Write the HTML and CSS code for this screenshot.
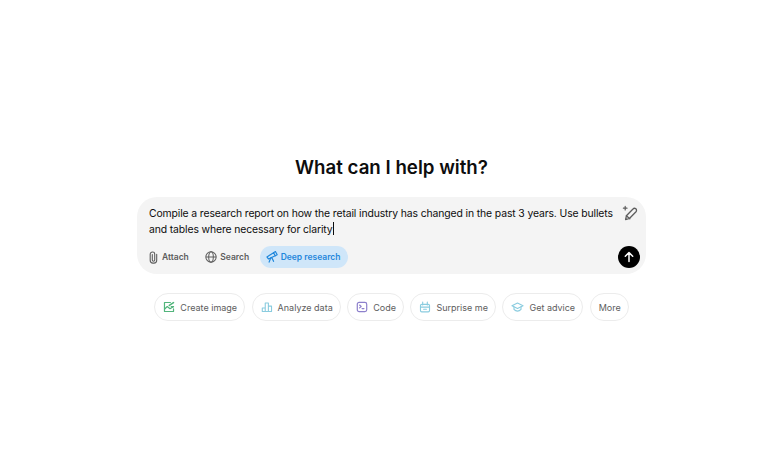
FILE: index.html
```html
<!DOCTYPE html>
<html lang="en">
<head>
    <meta charset="UTF-8">
    <title>What can I help with?</title>
    <link rel="stylesheet" href="styles.css">
</head>
<body>

<div class="container">
    <h1>What can I help with?</h1>

    <div class="composer">
        <div class="composer-top">
            <p class="prompt">Compile a research report on how the retail industry has changed in the past 3 years. Use bullets and tables where necessary for clarity<span class="caret"></span></p>
            <svg class="wand" width="16" height="16" viewBox="0 0 16 16" fill="none" stroke="#5d5d5d" stroke-width="1.3" stroke-linejoin="round" stroke-linecap="round">
                <path d="M3.6 14.6l.8-3.8 6.6-6.8a2 2 0 0 1 3 2.7l-6.6 6.8z"/>
                <path d="M4.4 10.8l3.4 3"/>
                <path d="M3.2 1.4v3.6M1.4 3.2H5" stroke-width="1.2"/>
            </svg>
        </div>
        <div class="composer-bottom">
            <div class="tools">
                <span class="tool">
                    <svg width="11" height="13" viewBox="0 0 11 13" fill="none" stroke="#5d5d5d" stroke-width="1.1" stroke-linecap="round">
                        <path d="M4.3 3.6v5.4a1.2 1.2 0 0 0 2.4 0V2.9a2 2 0 0 0-2-1.9h-.2a2.3 2.3 0 0 0-2.3 2.3v6a2.8 2.8 0 0 0 2.8 2.8h.9a2.8 2.8 0 0 0 2.8-2.8V3.4"/>
                    </svg>
                    Attach
                </span>
                <span class="tool">
                    <svg width="12" height="12" viewBox="0 0 13 13" fill="none" stroke="#5d5d5d" stroke-width="1.1">
                        <circle cx="6.5" cy="6.5" r="5.6"/>
                        <ellipse cx="6.5" cy="6.5" rx="2.5" ry="5.6"/>
                        <path d="M1 6.5h11"/>
                    </svg>
                    Search
                </span>
                <span class="tool tool-active">
                    <svg width="12" height="12" viewBox="0 0 13 13" fill="none" stroke="#1f87dc" stroke-width="1.3" stroke-linejoin="round" stroke-linecap="round">
                        <path d="M1 6.4l7.2-4.6 1.8 3.4-7.4 3.4z"/>
                        <path d="M8.2 1.8l2-1.2 1.9 3.4-2.1 1.2"/>
                        <path d="M5.2 7.4l-1.8 4.6M6.2 7l2 4.2"/>
                    </svg>
                    Deep research
                </span>
            </div>
            <button class="send" type="button" aria-label="Send">
                <svg width="12" height="12" viewBox="0 0 12 12" fill="none" stroke="#fff" stroke-width="1.5" stroke-linecap="round" stroke-linejoin="round">
                    <path d="M6 10.6V1.6M2.3 5.3L6 1.6l3.7 3.7"/>
                </svg>
            </button>
        </div>
    </div>

    <div class="chips">
        <span class="chip">
            <svg width="12" height="12" viewBox="0 0 13 13" fill="none" stroke="#52b57c" stroke-width="1.3" stroke-linejoin="round" stroke-linecap="round">
                <path d="M8 1.6H1.6v9.8h9.8V8.6"/>
                <path d="M1.8 8.6l2.8-2.6 3 2.4 3.6-2.2"/>
                <path d="M6.8 4.8l4.6-3" stroke-width="1.7"/>
                <path d="M9 6.2h2.4"/>
            </svg>
            Create image
        </span>
        <span class="chip">
            <svg width="12" height="12" viewBox="0 0 13 13" fill="none" stroke="#8accdf" stroke-width="1.2" stroke-linejoin="round">
                <path d="M1.4 11.4V7.6h3.2v3.8zM4.6 11.4V2.2h3.4v9.2zM8 11.4V5.6h3.4v5.8z"/>
            </svg>
            Analyze data
        </span>
        <span class="chip">
            <svg width="12" height="12" viewBox="0 0 13 13" fill="none" stroke="#8d80cc" stroke-width="1.3" stroke-linejoin="round" stroke-linecap="round">
                <rect x="1.4" y="1.4" width="10.2" height="10.2" rx="2"/>
                <path d="M3.9 4.4l1.7 1.5-1.7 1.5M6.6 8.2h2"/>
            </svg>
            Code
        </span>
        <span class="chip">
            <svg width="12" height="12" viewBox="0 0 13 13" fill="none" stroke="#8accdf" stroke-width="1.2" stroke-linejoin="round" stroke-linecap="round">
                <rect x="1.6" y="3.6" width="9.8" height="8.2" rx="1.4"/>
                <path d="M1.6 6.6h9.8M4 1.2v3M9 1.2v3M5 9h3"/>
            </svg>
            Surprise me
        </span>
        <span class="chip">
            <svg width="13" height="12" viewBox="0 0 14 13" fill="none" stroke="#8accdf" stroke-width="1.2" stroke-linejoin="round" stroke-linecap="round">
                <path d="M7 2.2l6 2.9-6 2.9-6-2.9z"/>
                <path d="M3.2 6.4v2.8c1.2 1.3 2.4 1.8 3.8 1.8s2.6-.5 3.8-1.8V6.4"/>
            </svg>
            Get advice
        </span>
        <span class="chip">More</span>
    </div>
</div>

</body>
</html>
```

FILE: styles.css
```css
body {
    font-family: Inter, "Liberation Sans", sans-serif;
    background-color: #fff;
    color: #0d0d0d;
    margin: 0;
    padding: 0;
}

.container {
    width: 509px;
    margin: 0 0 0 137px;
    padding-top: 155px;
}

h1 {
    font-size: 18.7px;
    font-weight: 600;
    line-height: 26px;
    text-align: center;
    margin: 0 0 16px;
}

.composer {
    background-color: #f4f4f4;
    border-radius: 20px;
    height: 77px;
    padding: 8px 6px 6px 12px;
    box-sizing: border-box;
    display: flex;
    flex-direction: column;
    justify-content: space-between;
}

.composer-top {
    display: flex;
    align-items: flex-start;
    justify-content: space-between;
}

.prompt {
    margin: 0;
    width: 470px;
    padding-top: 0.5px;
    font-size: 10.4px;
    letter-spacing: -0.12px;
    line-height: 16.5px;
}

.caret {
    display: inline-block;
    width: 1px;
    height: 13px;
    background-color: #0d0d0d;
    vertical-align: -2px;
}

.wand {
    margin: 0 2px 0 0;
}

.composer-bottom {
    display: flex;
    align-items: center;
    justify-content: space-between;
}

.tools {
    display: flex;
    align-items: center;
    gap: 4.5px;
    margin-left: -7px;
}

.tool {
    display: flex;
    align-items: center;
    gap: 3px;
    height: 22px;
    padding: 0 6px;
    border-radius: 11px;
    font-size: 8.5px;
    font-weight: 600;
    color: #5d5d5d;
}

.tool-active {
    background-color: #cfe6f9;
    color: #1f87dc;
    padding: 0 7px 0 6px;
}

.send {
    width: 22px;
    height: 22px;
    border: none;
    border-radius: 50%;
    padding: 0;
    background-color: #000;
    display: flex;
    align-items: center;
    justify-content: center;
}

.chips {
    display: flex;
    justify-content: center;
    gap: 6.5px;
    margin-top: 19px;
}

.chip {
    display: flex;
    align-items: center;
    gap: 5px;
    height: 28px;
    padding: 0 7px 0 8px;
    box-sizing: border-box;
    border: 1px solid #ececec;
    border-radius: 14px;
    font-size: 9px;
    color: #5d5d5d;
}
```
